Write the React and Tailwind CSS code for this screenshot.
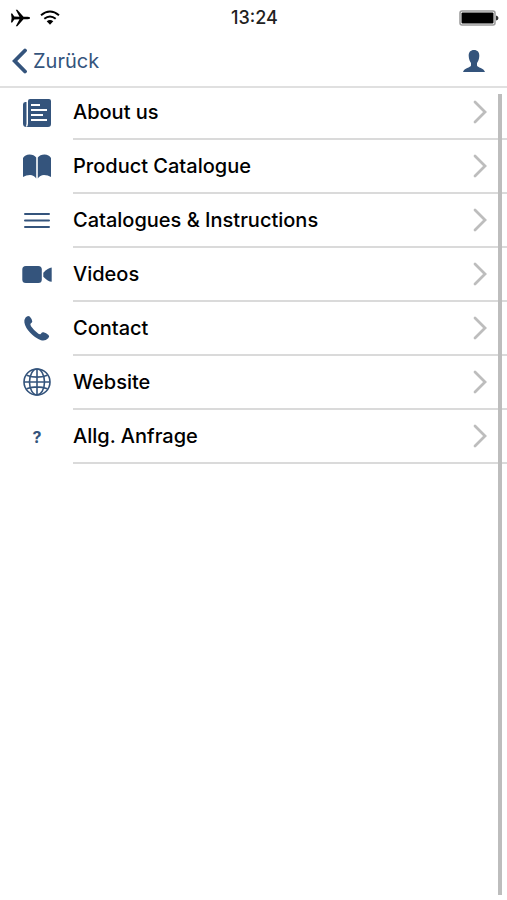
import React from "react";

function Icon({ children, className = "h-[30px] w-[30px]", viewBox = "0 0 30 30" }) {
  return (
    <svg viewBox={viewBox} className={className} fill="currentColor" aria-hidden="true">
      {children}
    </svg>
  );
}

function NewsIcon() {
  return (
    <Icon>
      <path d="M4.500 4H3.200Q1 4 1 6.500V25.500Q1 29 4.500 29Q3.600 27.500 4.500 26Z" />
      <path
        fillRule="evenodd"
        d="M8 1H27Q29 1 29 3V26Q29 29 26 29H4.500Q6 28 6 25.500V3Q6 1 8 1ZM9 6V8H18V6ZM9 11V13H25V11ZM9 16V18H21V16ZM9 21V23H25V21Z"
      />
    </Icon>
  );
}

function BookIcon() {
  return (
    <Icon>
      <path d="M1 6Q3 2.500 7.500 2.500Q12 2.500 14.200 5.500V26.500Q12 23 8 23Q4 23 1 25Z" />
      <path d="M29 6Q27 2.500 22.500 2.500Q18 2.500 15.800 5.500V26.500Q18 23 22 23Q26 23 29 25Z" />
    </Icon>
  );
}

function LinesIcon() {
  return (
    <Icon>
      <path d="M3 7H27Q28 7 28 8T27 9H3Q2 9 2 8T3 7ZM3 13.500H27Q28 13.500 28 14.500T27 15.500H3Q2 15.500 2 14.500T3 13.500ZM3 20H27Q28 20 28 21T27 22H3Q2 22 2 21T3 20Z" />
    </Icon>
  );
}

function VideoIcon() {
  return (
    <Icon>
      <rect x="0.300" y="6" width="19.500" height="17" rx="3.500" />
      <path d="M21.300 12.700Q26 7.700 29.700 7.500V21.800Q26 21.500 21.300 16.700Z" />
    </Icon>
  );
}

function PhoneIcon() {
  return (
    <Icon>
      <path d="M3.600 3.500Q5.800 1 7.700 2.500Q10.300 5.200 10.300 7.600Q10.200 8.800 8.700 9.600Q7.900 10.500 9 12.200Q12 16.500 16.400 19.800Q18 20.800 18.900 19.700Q20.100 18 21.500 18.300Q24.200 19 26.500 21Q28 22.600 26.200 24.300Q23 27.500 19 26.200Q13.500 24.500 8.200 18.800Q3.200 13.500 2.400 8.500Q2 5.600 3.600 3.500Z" />
    </Icon>
  );
}

function GlobeIcon() {
  return (
    <Icon>
      <g fill="none" stroke="currentColor" strokeWidth="1.600">
        <circle cx="15" cy="14" r="13" />
        <ellipse cx="15" cy="14" rx="7.500" ry="13" />
        <path d="M15 1V27M2 14H28M4.500 7.200Q15 11 25.500 7.200M4.500 20.800Q15 17 25.500 20.800" />
      </g>
    </Icon>
  );
}

function QuestionIcon() {
  return <span className="text-base font-bold">?</span>;
}

const items = [
  { label: "About us", icon: NewsIcon },
  { label: "Product Catalogue", icon: BookIcon },
  { label: "Catalogues & Instructions", icon: LinesIcon },
  { label: "Videos", icon: VideoIcon },
  { label: "Contact", icon: PhoneIcon },
  { label: "Website", icon: GlobeIcon },
  { label: "Allg. Anfrage", icon: QuestionIcon },
];

function StatusBar() {
  return (
    <div className="grid h-[35px] grid-cols-3 items-center pl-[10px] pr-2 text-black">
      <div className="flex items-center gap-[10px]">
        <Icon viewBox="0 0 20 18" className="h-[18px] w-5">
          <path d="M1 4.500H2.200L4.300 7.500L9.500 7.700L5.800 0.800H7.300L13.500 7.700H17.500Q20.200 8 20.200 9T17.500 10.300H13.500L7.300 17.200H5.800L9.500 10.300L4.300 10.500L2.200 13.500H1L1.600 9Z" />
        </Icon>
        <Icon viewBox="0 0 20 16" className="h-4 w-5">
          <g fill="none" stroke="currentColor" strokeWidth="2">
            <path d="M1 5.200Q10 -2.200 19 5.200" />
            <path d="M4.300 8.800Q10 4.200 15.700 8.800" />
          </g>
          <path d="M6.700 11.300Q10 8.700 13.300 11.300L10 14.700Z" />
        </Icon>
      </div>
      <time className="text-center text-lg font-medium text-[#222222]">13:24</time>
      <Icon viewBox="0 0 40 16" className="h-4 w-10 justify-self-end">
        <rect x="1" y="1" width="35" height="14" rx="2" fill="white" stroke="#999999" strokeWidth="1.500" />
        <rect x="2.500" y="2.500" width="32" height="11" rx="1" />
        <path d="M37 5.500Q39.500 6 39.500 8T37 10.500Z" fill="#333333" />
      </Icon>
    </div>
  );
}

export default function App() {
  return (
    <div className="relative min-h-screen bg-white font-['Inter','Liberation_Sans',sans-serif]">
      <header className="border-b-2 border-[#e0e0e0]">
        <StatusBar />
        <div className="flex h-[51px] items-center justify-between pl-3 pr-[22px] text-[#34547c]">
          <button type="button" className="flex items-center gap-[6px] text-xl">
            <Icon viewBox="0 0 15 26" className="h-[26px] w-[15px]">
              <path d="M13 2.500L2.700 13L13 23.500" fill="none" stroke="currentColor" strokeWidth="3.800" strokeLinecap="round" />
            </Icon>
            Zurück
          </button>
          <button type="button" aria-label="Profile">
            <Icon viewBox="0 0 22 24" className="h-6 w-[22px]">
              <path d="M11 1C14.500 1 16.500 3.300 16.300 7C16.200 10.500 15 12.500 14 14V16.500C14.300 18.500 21 19 22 23H0C1 19 7.700 18.500 8 16.500V14C7 12.500 5.800 10.500 5.700 7C5.500 3.300 7.500 1 11 1Z" />
            </Icon>
          </button>
        </div>
      </header>
      <nav className="-mt-[2px]">
        <ul>
          {items.map(({ label, icon: ItemIcon }) => (
            <li key={label}>
              <a href="#" className="flex h-[54px] items-center pl-[22px]">
                <span className="flex w-[30px] justify-center text-[#34547c]">
                  <ItemIcon />
                </span>
                <span className="ml-[21px] flex h-full flex-1 items-center justify-between border-b-2 border-[#dadada] pr-5 text-xl font-medium text-black">
                  {label}
                  <Icon viewBox="0 0 14 24" className="h-6 w-[14px] text-[#bdbdbd]">
                    <path d="M2 2L12 12L2 22" fill="none" stroke="currentColor" strokeWidth="2.800" strokeLinecap="round" />
                  </Icon>
                </span>
              </a>
            </li>
          ))}
        </ul>
      </nav>
      <div className="absolute bottom-[5px] right-[5px] top-[94px] w-1 bg-[#bdbdbd]" />
    </div>
  );
}
